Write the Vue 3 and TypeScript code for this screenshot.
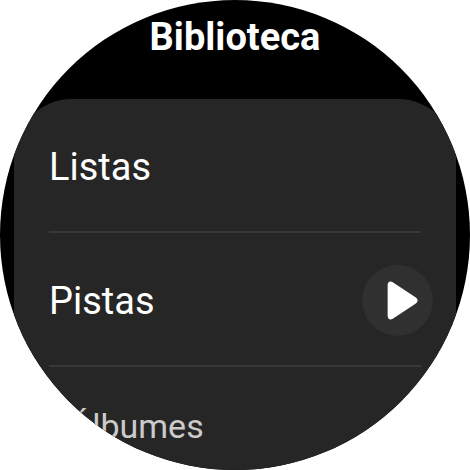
<script setup lang="ts">
interface LibraryItem {
  id: string
  label: string
  playable?: boolean
  receding?: boolean
}

const items: LibraryItem[] = [
  { id: 'playlists', label: 'Listas' },
  { id: 'tracks', label: 'Pistas', playable: true },
  { id: 'albums', label: 'Álbumes', receding: true },
]
</script>

<template>
  <main class="watch">
    <h1 class="title">Biblioteca</h1>
    <ul class="card">
      <li v-for="item in items" :key="item.id" class="row" :class="{ receding: item.receding }">
        <a class="label" :href="'#' + item.id">{{ item.label }}</a>
        <button v-if="item.playable" class="play" type="button" :aria-label="item.label">
          <svg viewBox="0 0 72 72" aria-hidden="true">
            <path
              d="M26 20.5C26 17 28.6 15.8 31.2 17.5L54.6 33C57 34.6 57 37.4 54.6 39L31.2 54.6C28.6 56.3 26 55 26 51.5Z"
            />
          </svg>
        </button>
      </li>
    </ul>
  </main>
</template>

<style>
body {
  background: #fff;
}
</style>

<style scoped>
.watch {
  display: flex;
  flex-direction: column;
  width: 100%;
  aspect-ratio: 1;
  overflow: hidden;
  border-radius: 50%;
  background: #000;
  font-family: Roboto, 'Liberation Sans', sans-serif;
  color: #fff;
}

.title {
  margin: 0;
  padding: 13px 0 38px;
  font-size: 38px;
  font-weight: 700;
  line-height: 48px;
  text-align: center;
}

.card {
  flex: 1 0 auto;
  margin: 0 14px;
  padding: 0;
  list-style: none;
  border-radius: 58px 58px 0 0;
  background: #262626;
}

.row {
  display: flex;
  align-items: center;
  justify-content: space-between;
  box-sizing: border-box;
  height: 134px;
  padding: 0 23px 0 35px;
}

.row:not(:last-child) {
  background: linear-gradient(#383838, #383838) 35px 100% / calc(100% - 70px) 2px no-repeat;
}

.label {
  padding-top: 2px;
  font-size: 38px;
  line-height: 48px;
  color: #fff;
  text-decoration: none;
}

.receding {
  height: 116px;
  padding-left: 56px;
}

.receding .label {
  font-size: 34px;
  color: #cbcbcb;
}

.play {
  width: 71px;
  height: 71px;
  padding: 0;
  border: 0;
  border-radius: 50%;
  background: #303030;
}

.play svg {
  display: block;
  width: 100%;
  height: 100%;
  fill: #fff;
}
</style>
